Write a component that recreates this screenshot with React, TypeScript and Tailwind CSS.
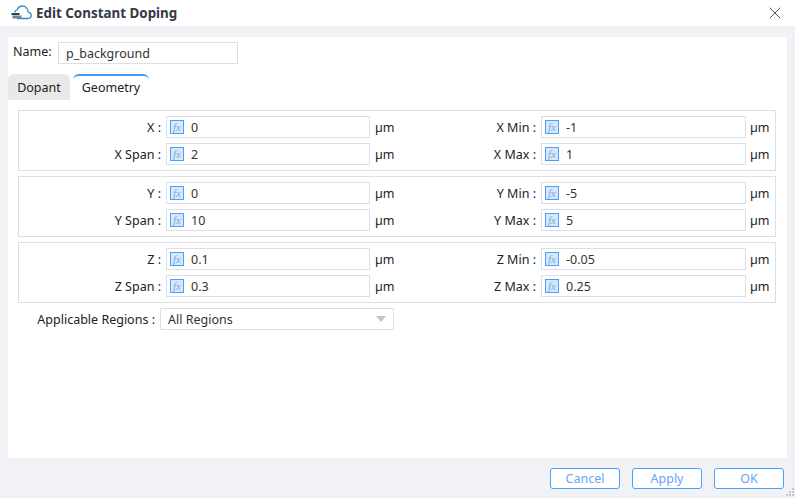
import React from 'react';
import { X } from 'lucide-react';

const FONT = "font-['Noto_Sans','Liberation_Sans',sans-serif]";

const groups = [
  [
    { left: 'X :', leftVal: '0', right: 'X Min :', rightVal: '-1' },
    { left: 'X Span :', leftVal: '2', right: 'X Max :', rightVal: '1' },
  ],
  [
    { left: 'Y :', leftVal: '0', right: 'Y Min :', rightVal: '-5' },
    { left: 'Y Span :', leftVal: '10', right: 'Y Max :', rightVal: '5' },
  ],
  [
    { left: 'Z :', leftVal: '0.1', right: 'Z Min :', rightVal: '-0.05' },
    { left: 'Z Span :', leftVal: '0.3', right: 'Z Max :', rightVal: '0.25' },
  ],
];

const CloudIcon = () => (
  <svg width="21" height="15" viewBox="0 0 21 15" fill="none">
    <path
      d="M6 13.500h10.800c1.900 0 3.400-1.400 3.400-3.200 0-1.700-1.300-3-3-3.200C16.800 3.600 14.300 1 11.500 1 9 1 7.200 2.500 6.300 4.600 5 5 4 6 3.700 7.300"
      stroke="#2f8fc4"
      strokeWidth="1.300"
    />
    <rect x="0.500" y="8" width="8" height="2" fill="#2f4356" />
    <rect x="1.500" y="10.500" width="9" height="3" fill="#6b8596" />
  </svg>
);

const FxIcon = () => (
  <span className="flex h-[14px] w-[14px] shrink-0 items-center justify-center border border-[#4a9fff] bg-[#d6e8fb] font-['Liberation_Serif',serif] text-[11px] italic leading-none text-[#7fa9d6]">
    fx
  </span>
);

const Field = ({ value, width }: { value: string; width: string }) => (
  <div className={`flex h-[22px] items-center border border-[#dcdfe8] bg-white pl-[3px] ${width}`}>
    <FxIcon />
    <span className="ml-[7px] pt-[2px] text-[#333]">{value}</span>
  </div>
);

const App: React.FC = () => {
  return (
    <div className={`flex h-[498px] w-[795px] flex-col overflow-hidden bg-[#f0f2f5] ${FONT} text-[12.5px] text-[#222]`}>
      {/* Title bar */}
      <header className="flex h-[26px] shrink-0 items-center justify-between bg-white pl-[11px] pr-[10px]">
        <div className="flex items-center gap-[4px]">
          <CloudIcon />
          <span className="pt-px text-[13.4px] font-bold text-[#333a45]">Edit Constant Doping</span>
        </div>
        <X size={20} strokeWidth={1.100} className="text-[#444]" />
      </header>

      {/* Body */}
      <main className="mx-[8px] mt-[11px] h-[421px] bg-white">
        <div className="flex h-[27px] items-start pt-[5px]">
          <span className="ml-[5px] w-[45px] leading-[20px]">Name:</span>
          <div className="flex h-[22px] w-[180px] items-center border border-[#dcdfe8] pl-[7px] pt-[2px] text-[#333]">
            p_background
          </div>
        </div>

        {/* Tabs */}
        <div className="mt-[10px] flex h-[26px] items-stretch">
          <div className="flex w-[62px] items-center justify-center rounded-t-[6px] bg-[#e9e9e9] pt-[2px]">Dopant</div>
          <div className="ml-[3px] flex w-[76px] items-center justify-center rounded-t-[6px] border-t-2 border-[#3f9bf5]">Geometry</div>
        </div>

        {/* Geometry groups */}
        <div className="ml-[10px] mt-[10px] flex w-[758px] flex-col gap-[5px]">
          {groups.map((rows, i) => (
            <section key={i} className="flex h-[61px] flex-col gap-[5px] border border-[#dcdfe8] pt-[5px]">
              {rows.map(row => (
                <div key={row.left} className="flex h-[22px] items-center">
                  <span className="w-[142px] pt-[2px] text-right">{row.left}</span>
                  <div className="ml-[5px]">
                    <Field value={row.leftVal} width="w-[204px]" />
                  </div>
                  <span className="ml-[5px] w-[25px] pt-[2px]">µm</span>
                  <span className="w-[136px] pt-[2px] text-right">{row.right}</span>
                  <div className="ml-[5px]">
                    <Field value={row.rightVal} width="w-[205px]" />
                  </div>
                  <span className="ml-[4px] pt-[2px]">µm</span>
                </div>
              ))}
            </section>
          ))}
        </div>

        {/* Regions */}
        <div className="mt-[5px] flex h-[22px] items-center">
          <span className="w-[147px] pt-[2px] text-right">Applicable Regions :</span>
          <div className="ml-[5px] flex h-[22px] w-[234px] items-center justify-between border border-[#dcdfe8] pl-[7px] pr-[7px] text-[#333]">
            <span className="pt-[2px]">All Regions</span>
            <span className="h-0 w-0 border-x-[5px] border-t-[6px] border-x-transparent border-t-[#c0c4cc]" />
          </div>
        </div>
      </main>

      {/* Footer */}
      <footer className="relative mt-[10px] flex justify-end gap-[12px] pr-[11px]">
        {['Cancel', 'Apply', 'OK'].map(label => (
          <button
            key={label}
            className="flex h-[21px] w-[70px] items-center justify-center rounded-[3px] border border-[#4a9fff] bg-white pt-[2px] text-[#6aa5f5]"
          >
            {label}
          </button>
        ))}
        <svg className="absolute right-0 top-[19px]" width="10" height="10" viewBox="0 0 10 10" fill="#c4c7cc">
          <rect x="7" y="1" width="2" height="2" />
          <rect x="4" y="4" width="2" height="2" />
          <rect x="7" y="4" width="2" height="2" />
          <rect x="1" y="7" width="2" height="2" />
          <rect x="4" y="7" width="2" height="2" />
          <rect x="7" y="7" width="2" height="2" />
        </svg>
      </footer>
    </div>
  );
};

export default App;
